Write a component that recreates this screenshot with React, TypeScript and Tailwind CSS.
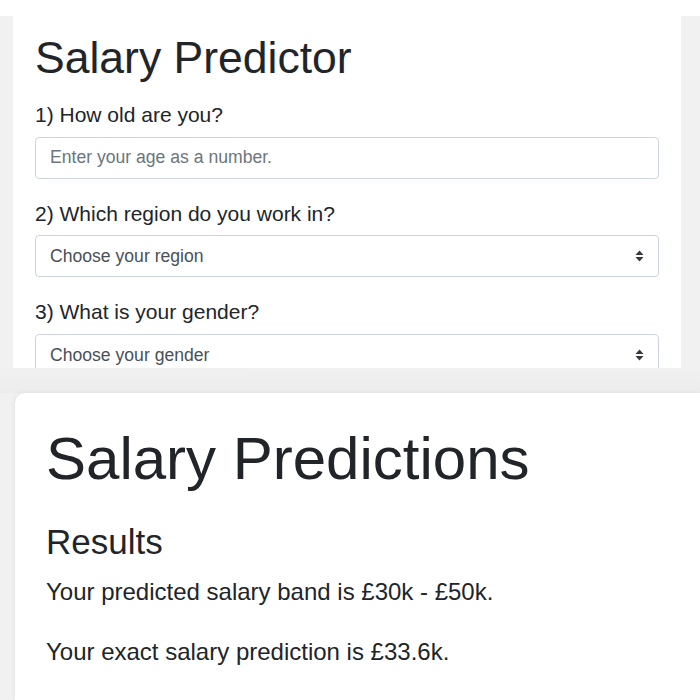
import React, { FC } from "react";

const font = { fontFamily: '"Liberation Sans", Arial, sans-serif' };

const SortArrows: FC = () => (
  <svg width="9" height="12" viewBox="0 0 9 12" className="text-[#343a40]">
    <path d="M4.5 0.5 L8.5 5 L0.5 5 Z" fill="currentColor" />
    <path d="M4.5 11.5 L8.5 7 L0.5 7 Z" fill="currentColor" />
  </svg>
);

const Question: FC<{ label: string; children: React.ReactNode }> = ({ label, children }) => (
  <div className="mb-[19px]">
    <div className="text-[21px] leading-[31.5px] text-[#212529] mb-[6px]">{label}</div>
    {children}
  </div>
);

const SelectBox: FC<{ text: string }> = ({ text }) => (
  <div className="h-[42px] w-full border border-[#ced4da] rounded-[4px] bg-white flex items-center justify-between pl-[14px] pr-[14px] text-[17.6px] text-[#495057]">
    <span>{text}</span>
    <SortArrows />
  </div>
);

const App: FC = () => {
  return (
    <div className="w-[700px] h-[700px] overflow-hidden bg-[#f1f1f1] flex flex-col" style={font}>
      {/* top form card */}
      <div className="flex h-[368px] shrink-0">
        <div className="w-[13px] flex flex-col">
          <div className="h-4 bg-white" />
          <div className="flex-1 bg-[#f1f1f1]" />
        </div>
        <div className="flex-1 bg-white px-[22px] pt-[31px] overflow-hidden">
          <h1 className="text-[44.5px] leading-[1.2] text-[#212529] mb-[15px]">Salary Predictor</h1>
          <Question label="1) How old are you?">
            <input
              className="h-[42px] w-full border border-[#ced4da] rounded-[4px] px-[14px] text-[17.6px] text-[#495057] placeholder:text-[#6c757d] outline-none"
              placeholder="Enter your age as a number."
            />
          </Question>
          <Question label="2) Which region do you work in?">
            <SelectBox text="Choose your region" />
          </Question>
          <Question label="3) What is your gender?">
            <SelectBox text="Choose your gender" />
          </Question>
        </div>
        <div className="w-[19px] flex flex-col">
          <div className="h-4 bg-white" />
          <div className="flex-1 bg-[#f1f1f1]" />
        </div>
      </div>

      {/* gap between screenshots */}
      <div className="h-[25px] shrink-0 bg-gradient-to-b from-[#f1f1f1] to-[#ececec]" />

      {/* results card */}
      <div className="flex flex-1 pl-[15px]">
        <div className="flex-1 bg-white rounded-tl-[10px] shadow-[-1px_0_4px_rgba(0,0,0,0.06)] pl-[31px] pt-[30px]">
          <h1 className="text-[60px] leading-[1.2] text-[#212529]">Salary Predictions</h1>
          <h2 className="text-[35px] leading-[1.2] text-[#212529] mt-[26px]">Results</h2>
          <p className="text-[24px] leading-[36px] text-[#212529] mt-[11px] mb-[24px]">
            Your predicted salary band is £30k - £50k.
          </p>
          <p className="text-[24px] leading-[36px] text-[#212529]">Your exact salary prediction is £33.6k.</p>
        </div>
      </div>
    </div>
  );
};

export default App;
